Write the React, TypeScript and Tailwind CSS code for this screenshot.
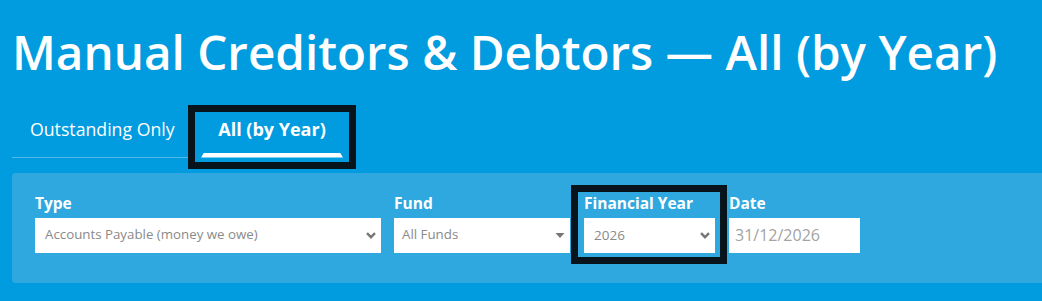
import React from 'react';

const Chevron = () => (
    <svg width="10" height="7" viewBox="0 0 10 7" className="shrink-0">
        <path d="M1 1.2 L5 5.2 L9 1.2" fill="none" stroke="#777" strokeWidth="2.4" />
    </svg>
);

const Caret = () => (
    <svg width="10" height="5" viewBox="0 0 10 5" className="shrink-0">
        <path d="M0.5 0 L9.5 0 L5 5 Z" fill="#777" />
    </svg>
);

const Field = ({ label, children }: { label: string; children: React.ReactNode }) => (
    <div className="flex flex-col">
        <div className="h-[26px] pt-[1px] text-[15.5px] font-bold leading-[20px] text-white">{label}</div>
        {children}
    </div>
);

const App: React.FC = () => {
    return (
        <div className="min-h-screen overflow-hidden bg-[#019bdf] font-['Open_Sans',sans-serif] antialiased">
            <h1 className="pl-[12px] pt-[28px] text-[47.6px] font-semibold leading-none text-white">
                Manual Creditors &amp; Debtors — All (by Year)
            </h1>

            <div className="mt-[29px] flex items-start pl-[12px]">
                <div className="h-[53px] w-[176px] border-b border-[#4db8e8] pl-[18px] pt-[12px] text-[17.7px] leading-[24px] text-white">
                    Outstanding Only
                </div>
                <div className="h-[64px] w-[168px] border-[7px] border-[#07141b] px-[6px]">
                    <div className="mt-[5px] text-center text-[18px] font-bold leading-[24px] text-white">All (by Year)</div>
                    <div className="mt-[12px] h-[5px] bg-white [clip-path:polygon(3px_0,calc(100%-3px)_0,100%_100%,0_100%)]" />
                </div>
            </div>

            <div className="ml-[12px] mt-[4px] flex h-[110px] w-[1040px] items-start rounded-[4px] bg-[#2ea8df] pl-[23px]">
                <div className="mt-[19px] w-[346px]">
                    <Field label="Type">
                        <div className="flex h-[35px] items-center justify-between bg-white pl-[10px] pr-[5px] text-[13.3px] text-[#8a8a8a]">
                            <span>Accounts Payable (money we owe)</span>
                            <Chevron />
                        </div>
                    </Field>
                </div>
                <div className="ml-[13px] mt-[19px] w-[176px]">
                    <Field label="Fund">
                        <div className="flex h-[35px] items-center justify-between bg-white pl-[8px] pr-[5px] text-[13.3px] text-[#8a8a8a]">
                            <span>All Funds</span>
                            <Caret />
                        </div>
                    </Field>
                </div>
                <div className="ml-[1px] mt-[12px] w-[156px] border-[7px] border-[#07141b] pb-[4px] pl-[6px] pr-[5px]">
                    <Field label="Financial Year">
                        <div className="flex h-[35px] items-center justify-between bg-white pl-[10px] pr-[5px] text-[13.5px] text-[#8a8a8a]">
                            <span>2026</span>
                            <Chevron />
                        </div>
                    </Field>
                </div>
                <div className="ml-[2px] mt-[19px] w-[131px]">
                    <Field label="Date">
                        <div className="flex h-[35px] items-center bg-white pl-[6px] text-[16px] text-[#a3a3a3]">
                            31/12/2026
                        </div>
                    </Field>
                </div>
            </div>
        </div>
    );
};

export default App;
